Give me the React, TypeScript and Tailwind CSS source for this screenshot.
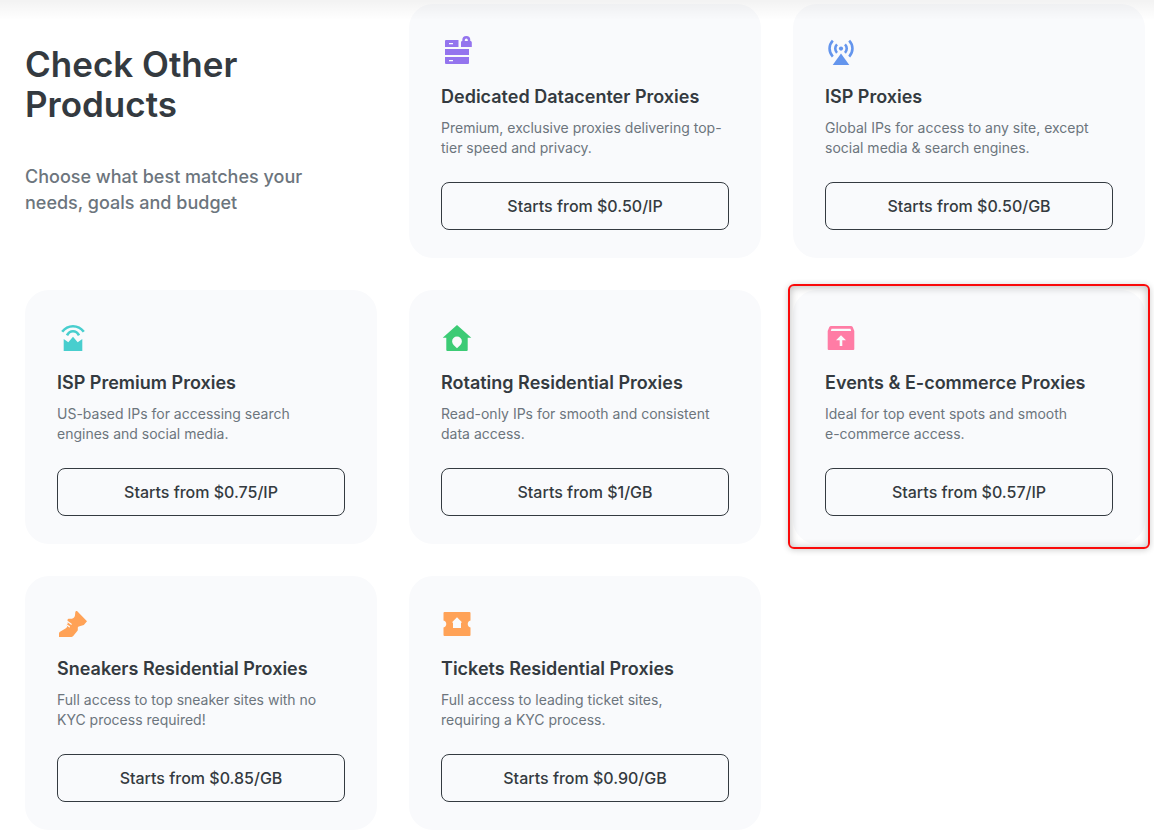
import type { ReactNode } from "react";

type Product = {
  name: string;
  description: string[];
  price: string;
  color: string;
  icon: ReactNode;
  highlighted?: boolean;
};

const products: Product[] = [
  {
    name: "Dedicated Datacenter Proxies",
    description: ["Premium, exclusive proxies delivering top-", "tier speed and privacy."],
    price: "$0.50/IP",
    color: "text-[#9474ee]",
    icon: (
      <>
        <path fillRule="evenodd" d="M5 4H17.5V11H4V5a1 1 0 0 1 1-1zM8 7v1.3h4V7z" />
        <path d="M4 13h24v6H4z" />
        <path fillRule="evenodd" d="M4 21h24v6a1 1 0 0 1-1 1H5a1 1 0 0 1-1-1zM8 24v1.3h4V24z" />
        <path
          fillRule="evenodd"
          d="M21.3 5V4a4 4 0 0 1 8 0v1c1 0 1.5.6 1.5 1.5V11H20V6.5c0-.9.4-1.5 1.3-1.5zM23.8 5h3V4a1.5 1.5 0 0 0-3 0z"
        />
      </>
    ),
  },
  {
    name: "ISP Proxies",
    description: ["Global IPs for access to any site, except", "social media & search engines."],
    price: "$0.50/GB",
    color: "text-[#6495ed]",
    icon: (
      <>
        <path d="M16 17.5L24.3 29H7.7z" />
        <circle cx="16" cy="12.6" r="2.1" />
        <g fill="none" stroke="currentColor" strokeWidth="2.6">
          <path d="M12 8.3a6.2 6.2 0 0 0 0 8.6M20 8.3a6.2 6.2 0 0 1 0 8.6" />
          <path d="M7.8 4.6a11.5 11.5 0 0 0 0 16M24.2 4.6a11.5 11.5 0 0 1 0 16" />
        </g>
      </>
    ),
  },
  {
    name: "ISP Premium Proxies",
    description: ["US-based IPs for accessing search", "engines and social media."],
    price: "$0.75/IP",
    color: "text-[#48cece]",
    icon: (
      <>
        <path d="M6.7 17l4.6 3.3L16 14.7l4.7 5.6 4.6-3.3v12H6.7z" />
        <g fill="none" stroke="currentColor" strokeWidth="2.6">
          <path d="M5.2 9.8C8 6.2 11.7 4.3 16 4.3s8 1.9 10.8 5.5" />
          <path d="M10 13.4C11.4 10.6 13.4 9.3 16 9.3s4.6 1.3 6 4.1" />
        </g>
      </>
    ),
  },
  {
    name: "Rotating Residential Proxies",
    description: ["Read-only IPs for smooth and consistent", "data access."],
    price: "$1/GB",
    color: "text-[#3ccb75]",
    icon: (
      <path
        fillRule="evenodd"
        d="M16 3l14.3 12.7h-3.6V28a1 1 0 0 1-1 1H6.3a1 1 0 0 1-1-1V15.7H1.7zM16 14.5a4.9 4.9 0 0 0-4.9 5c0 2.8 2.4 4 4.9 6.8 2.5-2.8 4.9-4 4.9-6.8a4.9 4.9 0 0 0-4.9-5z"
      />
    ),
  },
  {
    name: "Events & E-commerce Proxies",
    description: ["Ideal for top event spots and smooth", "e-commerce access."],
    price: "$0.57/IP",
    color: "text-[#ff7ca5]",
    highlighted: true,
    icon: (
      <path
        fillRule="evenodd"
        d="M6 4h20c.7 0 1.3.3 1.7 1l1.6 4v18a1 1 0 0 1-1 1H3.7a1 1 0 0 1-1-1V9l1.6-4c.4-.7 1-1 1.7-1zM6.5 6.7L5.8 9h20.4l-.7-2.3zM16 13.3l-5 4.9h3.7V24h2.6v-5.8H21z"
      />
    ),
  },
  {
    name: "Sneakers Residential Proxies",
    description: ["Full access to top sneaker sites with no", "KYC process required!"],
    price: "$0.85/GB",
    color: "text-[#ffa257]",
    icon: (
      <>
        <path d="M2 29v-3.5c0-.8.3-1.3 1-1.7l5.5-3.3c1-.6 1.6-1.3 1.6-2.2l-.8-1.6 1.5-1.2L10.5 12c.1-1 1-1.500 2-1.300 1.300.3 2.400.2 3.500-.5 1.200-.8 1.800-1.700 2-3l.3-2.900c.2-1.200 1.400-1.600 2.200-.9L30 13.300l-3.200 3.700-5 1.600c-.8.4-1 .8-1 1.600v1.500c0 .5-.2.900-.5 1.300l-4.100 4.900c-.8.8-1.400 1.100-2.400 1.100z" />
        <path
          d="M8.800 16.200l3.600 2.600M10.500 13.600l3.800 2.600"
          fill="none"
          stroke="#f9fafc"
          strokeWidth="1.200"
          strokeLinecap="round"
        />
      </>
    ),
  },
  {
    name: "Tickets Residential Proxies",
    description: ["Full access to leading ticket sites,", "requiring a KYC process."],
    price: "$0.90/GB",
    color: "text-[#ffa257]",
    icon: (
      <path
        fillRule="evenodd"
        d="M3.5 4h25a1 1 0 0 1 1 1v7.5a3.6 3.6 0 0 0 0 7V27a1 1 0 0 1-1 1h-25a1 1 0 0 1-1-1v-7.5a3.6 3.6 0 0 0 0-7V5a1 1 0 0 1 1-1zM16 9.3l-5.2 5.2H12V20h8v-5.5h1.2z"
      />
    ),
  },
];

function ProductCard({ product }: { product: Product }) {
  return (
    <article className="relative rounded-3xl bg-[#f9fafc] px-8 pt-8 pb-7">
      <svg
        viewBox="0 0 32 32"
        className={`size-8 ${product.color}`}
        fill="currentColor"
        aria-hidden="true"
      >
        {product.icon}
      </svg>
      <h3 className="mt-4 text-[18px] leading-[26px] font-semibold">{product.name}</h3>
      <p className="mt-2 text-[14px] leading-5 text-[#6c757d]">
        {product.description[0]}
        <br />
        {product.description[1]}
      </p>
      <button
        type="button"
        className="mt-6 h-12 w-full rounded-lg border border-[#343a40] text-[16px] font-medium"
      >
        Starts from {product.price}
      </button>
      {product.highlighted && (
        <div className="pointer-events-none absolute -inset-x-[5px] -top-[6px] -bottom-[5px] rounded-md border-2 border-[#fa0a0a] shadow-[0_1px_6px_rgba(0,0,0,0.2),inset_0_1px_8px_rgba(0,0,0,0.28)]" />
      )}
    </article>
  );
}

export default function App() {
  return (
    <main className="relative bg-white pt-1 pr-[9px] pb-2 pl-[25px] font-['Inter',sans-serif] text-[#343a40]">
      <section className="grid grid-cols-3 gap-8">
        <header className="pt-10">
          <h2 className="text-[35px] leading-10 font-semibold">
            Check Other
            <br />
            Products
          </h2>
          <p className="mt-10 max-w-[320px] text-[18px] leading-[26px] font-medium text-[#6c757d]">
            Choose what best matches your needs, goals and budget
          </p>
        </header>
        {products.map((product) => (
          <ProductCard key={product.name} product={product} />
        ))}
      </section>
      <div className="pointer-events-none absolute inset-x-0 top-0 h-5 bg-linear-to-b from-black/5 to-transparent" />
    </main>
  );
}
